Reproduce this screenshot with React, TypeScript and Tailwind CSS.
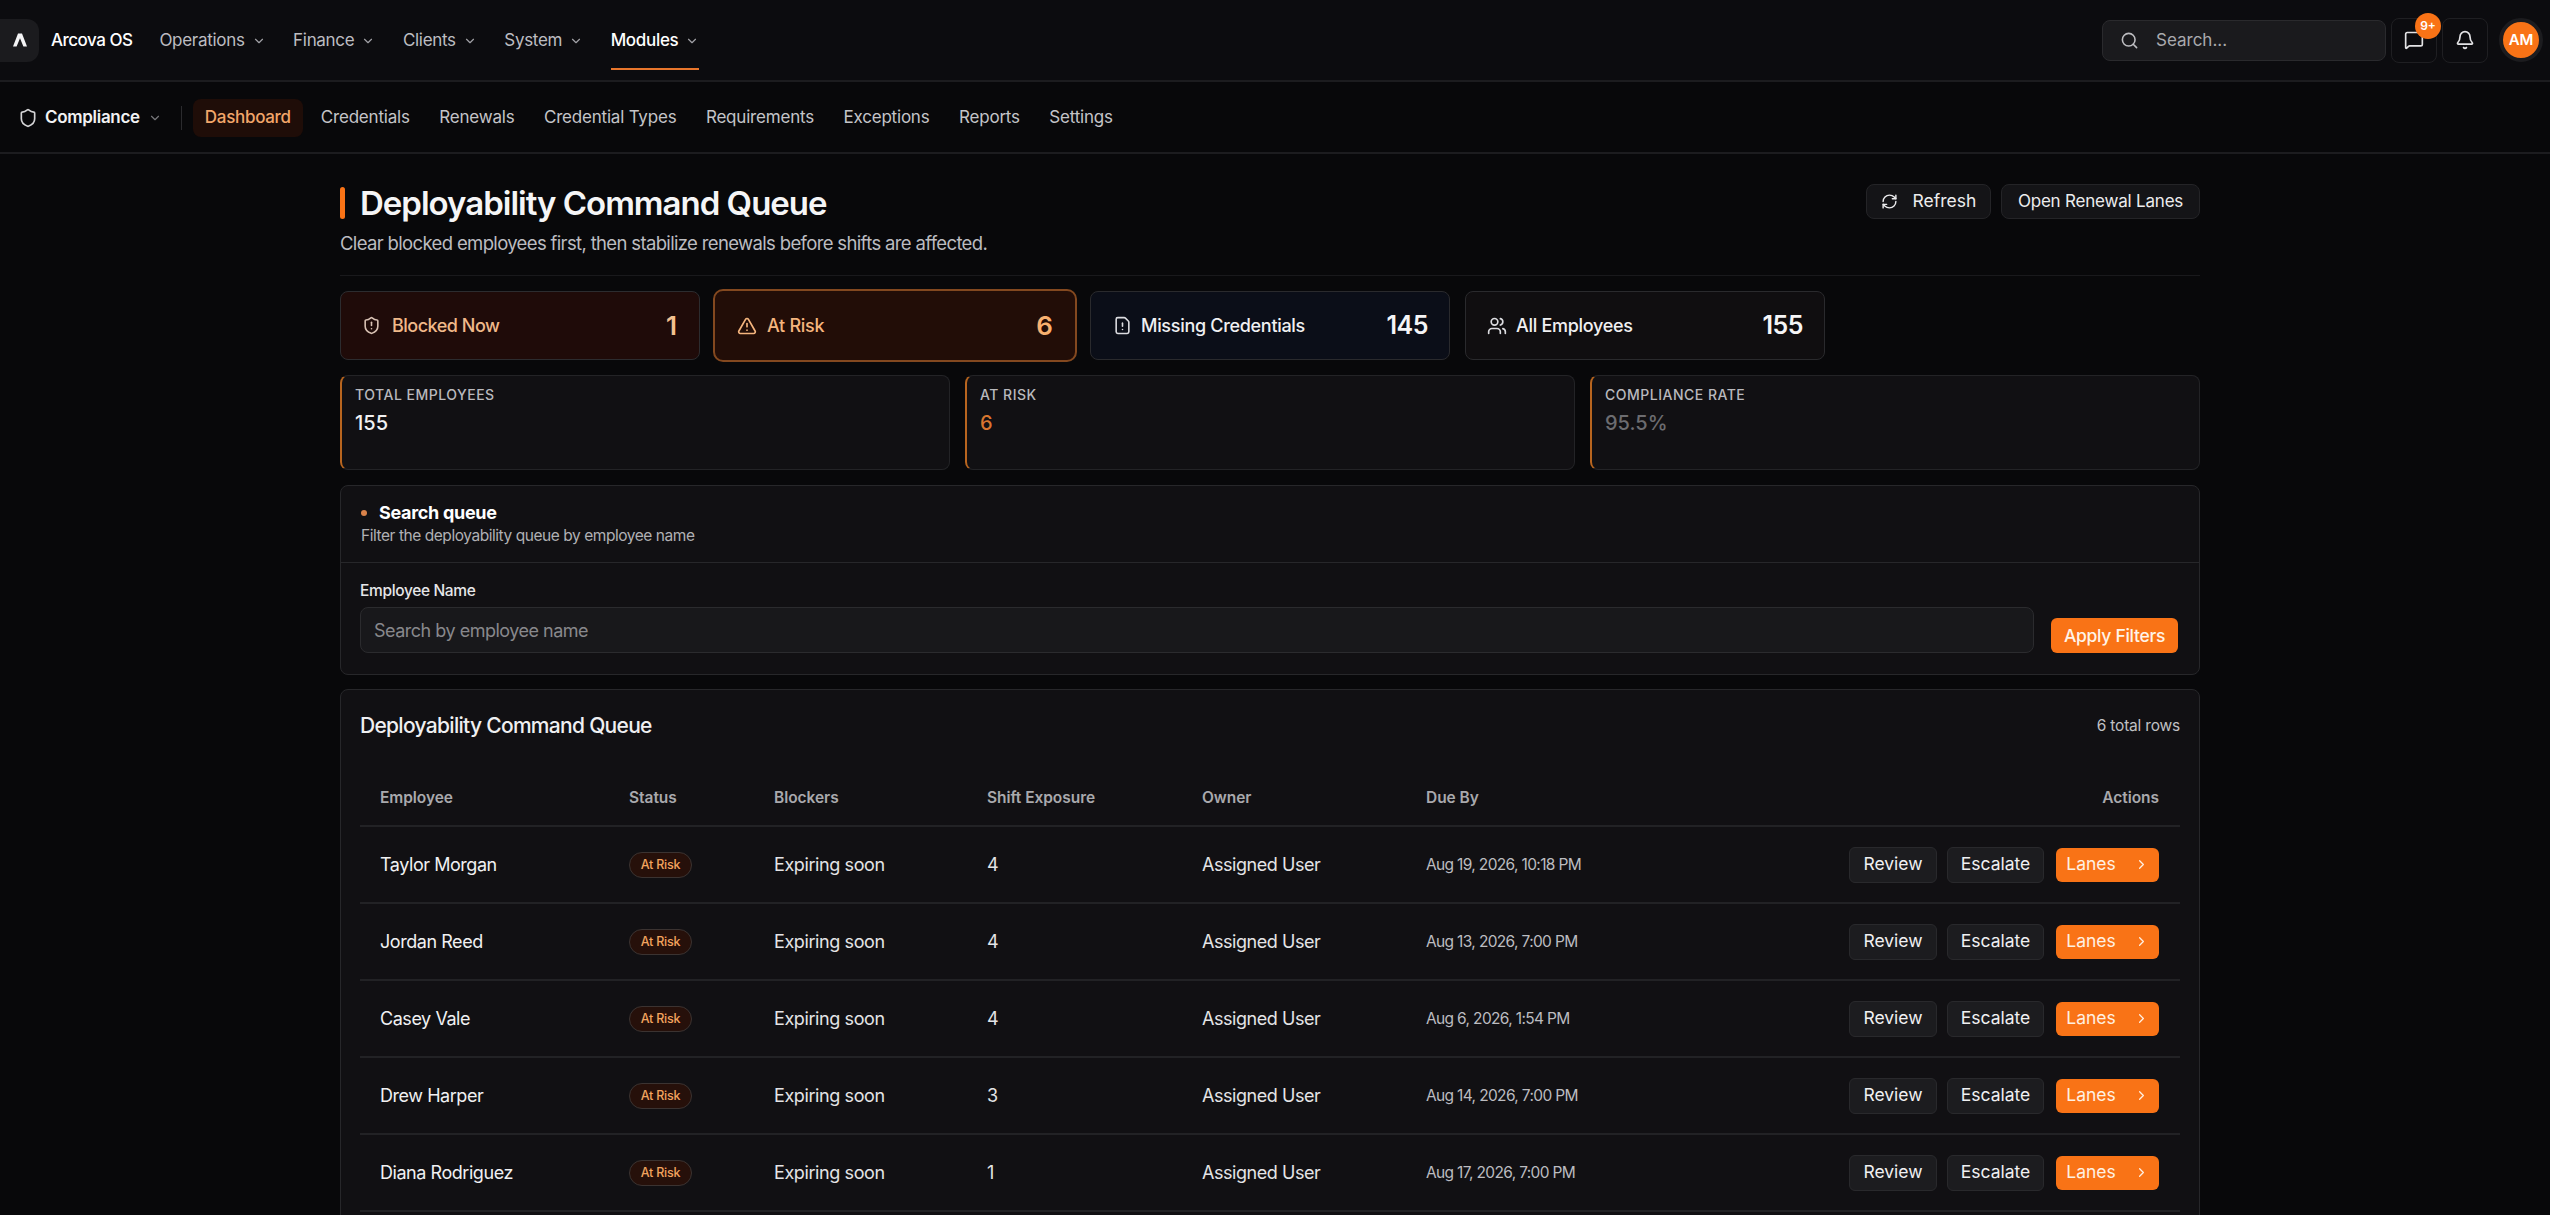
import React from 'react';
import { Bell, ChevronDown, ChevronRight, FileWarning, MessageSquare, RefreshCw, Search, Shield, ShieldAlert, TriangleAlert, Users } from 'lucide-react';

const topNav = ['Operations', 'Finance', 'Clients', 'System', 'Modules'];
const subNav = ['Credentials', 'Renewals', 'Credential Types', 'Requirements', 'Exceptions', 'Reports', 'Settings'];

const rows = [
  { name: 'Taylor Morgan', shifts: 4, due: 'Aug 19, 2026, 10:18 PM' },
  { name: 'Jordan Reed', shifts: 4, due: 'Aug 13, 2026, 7:00 PM' },
  { name: 'Casey Vale', shifts: 4, due: 'Aug 6, 2026, 1:54 PM' },
  { name: 'Drew Harper', shifts: 3, due: 'Aug 14, 2026, 7:00 PM' },
  { name: 'Diana Rodriguez', shifts: 1, due: 'Aug 17, 2026, 7:00 PM' },
];

const App: React.FC = () => {
  return (
    <div className="h-screen overflow-hidden bg-[#08080a] text-[#f2f2f3] font-['Inter',sans-serif]">
      <header className="h-[82px] flex items-center justify-between bg-[#0c0c0f] border-b-2 border-[#1c1c1f]">
        <div className="flex items-center h-full">
          <div className="w-[39px] h-[43px] rounded-r-xl bg-[#1b1b1e] flex items-center justify-center">
            <svg width="16" height="16" viewBox="0 0 16 16" fill="#f4f4f5"><path d="M6 1.5h4L15 14.5h-3.6L8 6.2 4.6 14.5H1z" /></svg>
          </div>
          <span className="ml-3 text-[17px] font-medium tracking-[-0.5px] text-white pt-[1px]">Arcova OS</span>
          <nav className="ml-[27px] flex items-center h-full gap-[27.5px]">
            {topNav.map((item) => (
              <div key={item} className={`relative h-full pt-[2px] flex items-center gap-[7px] text-[17px] tracking-[-0.3px] ${item === 'Modules' ? 'text-white font-medium' : 'text-[#bdbdc1]'}`}>
                {item}
                <ChevronDown size={14} className="text-[#a1a1a6]" />
                {item === 'Modules' && <div className="absolute left-0 right-0 bottom-[10px] h-[2px] bg-[#e8762c]" />}
              </div>
            ))}
          </nav>
        </div>
        <div className="flex items-center mr-[7px]">
          <div className="w-[284px] h-[41px] flex items-center rounded-lg bg-[#1a1a1d] border border-[#2a2a2d] pl-[17px]">
            <Search size={19} className="text-[#bdbdc1]" />
            <span className="ml-[17px] pt-[1px] text-[17px] text-[#a9a9ad]">Search...</span>
          </div>
          <div className="relative ml-[5px] w-[46px] h-[45px] rounded-lg border border-[#1f1f22] flex items-center justify-center">
            <MessageSquare size={20} className="text-[#e4e4e6]" />
            <div className="absolute -top-[6px] right-[-5px] w-[26px] h-[26px] rounded-full bg-[#f97316] flex items-center justify-center text-[12px] font-semibold text-white">9+</div>
          </div>
          <div className="ml-[5px] w-[46px] h-[45px] rounded-lg border border-[#1f1f22] flex items-center justify-center">
            <Bell size={20} className="text-[#e4e4e6]" />
          </div>
          <div className="ml-[11px] w-[44px] h-[44px] rounded-full border-[4px] border-[#1c1c1f] bg-[#f97316] flex items-center justify-center text-[15px] font-semibold text-white">AM</div>
        </div>
      </header>

      <div className="h-[72px] flex items-center pl-[18px] pt-[2px] bg-[#08080a] border-b-2 border-[#1c1c1f]">
        <Shield size={20} className="text-[#d4d4d6]" />
        <span className="ml-[7px] text-[17px] font-semibold tracking-[-0.3px] text-[#f2f2f3]">Compliance</span>
        <ChevronDown size={14} className="ml-[8px] text-[#77777b]" />
        <div className="ml-[19px] w-px h-[24px] bg-[#2b2b2e]" />
        <div className="ml-[11px] h-[38px] px-[12px] rounded-lg bg-[#1f0d08] flex items-center text-[17px] font-medium tracking-[-0.3px] text-[#f2a66a]">Dashboard</div>
        <nav className="ml-[18px] flex items-center gap-[29.5px]">
          {subNav.map((item) => (
            <span key={item} className="text-[17px] tracking-[-0.2px] text-[#c4c4c8]">{item}</span>
          ))}
        </nav>
      </div>

      <main className="w-[1860px] ml-[340px] pt-[30px]">
        <div className="flex items-start justify-between">
          <div>
            <div className="flex items-center">
              <div className="w-[5px] h-[32px] rounded-sm bg-[#f97316]" />
              <h1 className="ml-[15px] text-[33px] leading-[38px] font-semibold tracking-[-1px] text-[#f5f5f6]">Deployability Command Queue</h1>
            </div>
            <p className="mt-[8px] text-[18.5px] leading-[26px] tracking-[-0.65px] text-[#bcbcc0]">Clear blocked employees first, then stabilize renewals before shifts are affected.</p>
          </div>
          <div className="flex items-center gap-[10px]">
            <button className="h-[35px] w-[125px] flex items-center justify-center gap-[15px] rounded-lg bg-[#141417] border border-[#242427] text-[17.5px] text-[#ececee]">
              <RefreshCw size={17} />Refresh
            </button>
            <button className="h-[35px] w-[199px] rounded-lg bg-[#141417] border border-[#242427] text-[17px] tracking-[-0.2px] text-[#ececee]">Open Renewal Lanes</button>
          </div>
        </div>
        <div className="mt-[19px] h-px bg-[#19191c]" />

        <div className="mt-[15px] flex gap-[15px]">
          <div className="w-[360px] h-[69px] rounded-lg bg-[#1f0b09] border border-[#2c2c2f] flex items-center pl-[21px] pr-[22px]">
            <ShieldAlert size={19} className="text-[#d9c2b4]" />
            <span className="ml-[11px] text-[18px] font-medium tracking-[-0.5px] text-[#f0b98a]">Blocked Now</span>
            <span className="ml-auto text-[26px] font-semibold text-[#f3c190]">1</span>
          </div>
          <div className="w-[364px] h-[73px] -mx-[2px] -my-[2px] rounded-[10px] bg-[#220d07] border-2 border-[#83481f] flex items-center pl-[22px] pr-[22px]">
            <TriangleAlert size={20} className="text-[#f5b57e]" />
            <span className="ml-[10px] text-[18px] font-medium tracking-[-0.3px] text-[#f5b57e]">At Risk</span>
            <span className="ml-auto text-[26px] font-semibold text-[#f8b06f]">6</span>
          </div>
          <div className="w-[360px] h-[69px] rounded-lg bg-[#0b0e18] border border-[#2a2a2d] flex items-center pl-[22px] pr-[21px]">
            <FileWarning size={19} className="text-[#dcdce0]" />
            <span className="ml-[9px] text-[18px] font-medium tracking-[-0.3px] text-[#f0f0f2]">Missing Credentials</span>
            <span className="ml-auto text-[25px] font-semibold tracking-[-0.5px] text-[#f5f5f6]">145</span>
          </div>
          <div className="w-[360px] h-[69px] rounded-lg bg-[#100e10] border border-[#2a2a2d] flex items-center pl-[21px] pr-[21px]">
            <Users size={20} className="text-[#dcdce0]" />
            <span className="ml-[9px] text-[18px] font-medium tracking-[-0.3px] text-[#f0f0f2]">All Employees</span>
            <span className="ml-auto text-[25px] font-semibold tracking-[-0.5px] text-[#f5f5f6]">155</span>
          </div>
        </div>

        <div className="mt-[15px] grid grid-cols-3 gap-[15px]">
          {[
            { label: 'TOTAL EMPLOYEES', value: '155', color: 'text-[#f2f2f3]' },
            { label: 'AT RISK', value: '6', color: 'text-[#d9762f]' },
            { label: 'COMPLIANCE RATE', value: '95.5%', color: 'text-[#6c6c70]' },
          ].map((kpi) => (
            <div key={kpi.label} className="h-[95px] rounded-lg bg-[#111013] border border-[#232326] border-l-2 border-l-[#b8651f] pl-[13px] pt-[10px]">
              <div className="text-[14px] leading-[18px] font-medium tracking-[0.5px] text-[#b9b9bd]">{kpi.label}</div>
              <div className={`mt-[5px] text-[20px] leading-[28px] font-medium ${kpi.color}`}>{kpi.value}</div>
            </div>
          ))}
        </div>

        <section className="mt-[15px] h-[190px] rounded-lg bg-[#111013] border border-[#27272a]">
          <div className="h-[77px] border-b border-[#27272a] pl-[20px] pt-[14px]">
            <div className="flex items-center">
              <div className="w-[6px] h-[6px] rounded-full bg-[#d9824a]" />
              <span className="ml-[12px] text-[18px] leading-[26px] font-bold tracking-[-0.3px] text-white">Search queue</span>
            </div>
            <p className="text-[15.5px] leading-[20px] tracking-[-0.45px] text-[#b0b0b4]">Filter the deployability queue by employee name</p>
          </div>
          <div className="flex items-start pl-[19px] pr-[21px] pt-[18px]">
            <div className="flex-1">
              <div className="text-[15.5px] leading-[20px] font-medium tracking-[-0.35px] text-[#e6e6e8]">Employee Name</div>
              <div className="mt-[6px] h-[46px] rounded-lg bg-[#18181b] border border-[#2b2b2e] flex items-center pl-[13px] text-[18px] tracking-[-0.5px] text-[#88888c]">Search by employee name</div>
            </div>
            <button className="ml-[17px] mt-[37px] h-[35px] w-[127px] pt-[1px] rounded-md bg-[#f97316] text-[17.5px] font-medium tracking-[-0.3px] text-[#fff3e8]">Apply Filters</button>
          </div>
        </section>

        <section className="mt-[14px] rounded-lg bg-[#111013] border border-[#27272a] px-[19px] pb-[40px]">
          <div className="h-[62px] pt-[10px] flex items-center justify-between">
            <h2 className="text-[21px] font-medium tracking-[-0.7px] text-[#efeff1]">Deployability Command Queue</h2>
            <span className="text-[15.5px] tracking-[-0.2px] text-[#c0c0c4]">6 total rows</span>
          </div>
          <table className="w-full table-fixed border-collapse">
            <thead>
              <tr className="h-[74px] border-b-2 border-[#222225] text-left text-[15.5px] tracking-[-0.05px] text-[#a9a9ad]">
                <th className="w-[269px] pl-[20px] pt-[18px] font-semibold">Employee</th>
                <th className="w-[145px] pt-[18px] font-semibold">Status</th>
                <th className="w-[213px] pt-[18px] font-semibold">Blockers</th>
                <th className="w-[215px] pt-[18px] font-semibold">Shift Exposure</th>
                <th className="w-[224px] pt-[18px] font-semibold">Owner</th>
                <th className="w-[280px] pt-[18px] font-semibold">Due By</th>
                <th className="pr-[21px] pt-[18px] text-right font-semibold">Actions</th>
              </tr>
            </thead>
            <tbody>
              {rows.map((row) => (
                <tr key={row.name} className="h-[77px] border-b-2 border-[#222225]">
                  <td className="pl-[20px] text-[18px] tracking-[-0.45px] text-[#f0f0f2]">{row.name}</td>
                  <td>
                    <span className="inline-flex items-center justify-center w-[63px] h-[26px] rounded-full bg-[#26100a] border border-[#3b3331] text-[12.5px] font-medium tracking-[-0.2px] text-[#f2a35e]">At Risk</span>
                  </td>
                  <td className="text-[18px] tracking-[-0.4px] text-[#e4e4e6]">Expiring soon</td>
                  <td className="text-[18px] text-[#e4e4e6]">{row.shifts}</td>
                  <td className="text-[18px] tracking-[-0.45px] text-[#e4e4e6]">Assigned User</td>
                  <td className="text-[15.5px] tracking-[-0.65px] text-[#bcbcc0]">{row.due}</td>
                  <td className="pr-[21px]">
                    <div className="flex items-center justify-end">
                      <button className="w-[88px] h-[36px] rounded-md bg-[#1c1c1f] border border-[#29292c] text-[17.5px] text-[#f0f0f2]">Review</button>
                      <button className="ml-[10px] w-[97px] h-[36px] rounded-md bg-[#1c1c1f] border border-[#29292c] text-[17.5px] text-[#f0f0f2]">Escalate</button>
                      <button className="ml-[12px] w-[103px] h-[34px] rounded-md bg-[#f97316] flex items-center justify-center gap-[18px] text-[17.5px] text-[#fff0e2]">Lanes<ChevronRight size={15} /></button>
                    </div>
                  </td>
                </tr>
              ))}
            </tbody>
          </table>
        </section>
      </main>
    </div>
  );
};

export default App;
